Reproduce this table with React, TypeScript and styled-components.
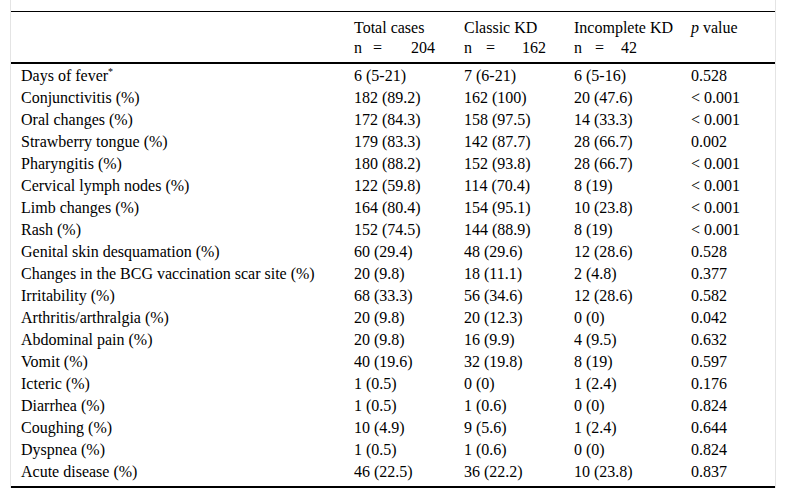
import React from "react";
import styled, { createGlobalStyle } from "styled-components";

const Global = createGlobalStyle`
  html, body { margin: 0; padding: 0; background: #fff; }
  body { font-family: "Liberation Serif", "Times New Roman", serif; color: #000; }
`;

const Page = styled.div`
  padding-left: 10px;
`;

const Frame = styled.div`
  width: 764px;
  padding-top: 11px;
  border-left: 1px solid #e4e4e4;
  border-right: 1px solid #e4e4e4;
`;

const Table = styled.table`
  width: 764px;
  border-collapse: collapse;
  table-layout: fixed;
  font-family: "Liberation Serif", "Times New Roman", serif;
  font-size: 16px;
  color: #000;
  border-top: 1px solid #000;
  border-bottom: 2px solid #000;
`;

const HeadRow = styled.tr`
  border-bottom: 2px solid #000;
`;

const HeadCell = styled.th`
  text-align: left;
  font-weight: normal;
  vertical-align: top;
  padding: 6px 0 4px 10px;
  line-height: 20px;
  white-space: nowrap;
`;

const Line = styled.div`
  display: flex;
  align-items: baseline;
  height: 20px;
`;

const Gap = styled.span<{ $w: number }>`
  margin-left: ${(p) => p.$w}px;
`;

const Cell = styled.td`
  padding: 1px 0 0 10px;
  height: 21px;
  line-height: 21px;
  white-space: nowrap;
`;

const SpacerCell = styled.td`
  height: 4px;
  padding: 0;
`;

const Sup = styled.sup`
  font-size: 10px;
  line-height: 0;
  vertical-align: 6px;
`;

const Ital = styled.i`
  font-style: italic;
`;

const cols = [333, 110, 110, 117, 94];

const heads: { title: string; n: string; g1: number; g2: number }[] = [
  { title: "Total cases", n: "204", g1: 11, g2: 29 },
  { title: "Classic KD", n: "162", g1: 14, g2: 27 },
  { title: "Incomplete KD", n: "42", g1: 13, g2: 17 },
];

const rows: [string, string, string, string, string][] = [
  ["Days of fever", "6 (5-21)", "7 (6-21)", "6 (5-16)", "0.528"],
  ["Conjunctivitis (%)", "182 (89.2)", "162 (100)", "20 (47.6)", "< 0.001"],
  ["Oral changes (%)", "172 (84.3)", "158 (97.5)", "14 (33.3)", "< 0.001"],
  ["Strawberry tongue (%)", "179 (83.3)", "142 (87.7)", "28 (66.7)", "0.002"],
  ["Pharyngitis (%)", "180 (88.2)", "152 (93.8)", "28 (66.7)", "< 0.001"],
  ["Cervical lymph nodes (%)", "122 (59.8)", "114 (70.4)", "8 (19)", "< 0.001"],
  ["Limb changes (%)", "164 (80.4)", "154 (95.1)", "10 (23.8)", "< 0.001"],
  ["Rash (%)", "152 (74.5)", "144 (88.9)", "8 (19)", "< 0.001"],
  ["Genital skin desquamation (%)", "60 (29.4)", "48 (29.6)", "12 (28.6)", "0.528"],
  ["Changes in the BCG vaccination scar site (%)", "20 (9.8)", "18 (11.1)", "2 (4.8)", "0.377"],
  ["Irritability (%)", "68 (33.3)", "56 (34.6)", "12 (28.6)", "0.582"],
  ["Arthritis/arthralgia (%)", "20 (9.8)", "20 (12.3)", "0 (0)", "0.042"],
  ["Abdominal pain (%)", "20 (9.8)", "16 (9.9)", "4 (9.5)", "0.632"],
  ["Vomit (%)", "40 (19.6)", "32 (19.8)", "8 (19)", "0.597"],
  ["Icteric (%)", "1 (0.5)", "0 (0)", "1 (2.4)", "0.176"],
  ["Diarrhea (%)", "1 (0.5)", "1 (0.6)", "0 (0)", "0.824"],
  ["Coughing (%)", "10 (4.9)", "9 (5.6)", "1 (2.4)", "0.644"],
  ["Dyspnea (%)", "1 (0.5)", "1 (0.6)", "0 (0)", "0.824"],
  ["Acute disease (%)", "46 (22.5)", "36 (22.2)", "10 (23.8)", "0.837"],
];

export default function App() {
  return (
    <>
      <Global />
      <Page>
        <Frame>
          <Table>
            <colgroup>
              {cols.map((w, i) => (
                <col key={i} style={{ width: w }} />
              ))}
            </colgroup>
            <thead>
              <HeadRow>
                <HeadCell />
                {heads.map((h) => (
                  <HeadCell key={h.title}>
                    <Line>{h.title}</Line>
                    <Line>
                      <span>n</span>
                      <Gap $w={h.g1}>=</Gap>
                      <Gap $w={h.g2}>{h.n}</Gap>
                    </Line>
                  </HeadCell>
                ))}
                <HeadCell>
                  <Line>
                    <Ital>p</Ital>&nbsp;value
                  </Line>
                </HeadCell>
              </HeadRow>
            </thead>
            <tbody>
              {rows.map((r, i) => (
                <tr key={r[0]}>
                  <Cell>
                    {r[0]}
                    {i === 0 && <Sup>*</Sup>}
                  </Cell>
                  <Cell>{r[1]}</Cell>
                  <Cell>{r[2]}</Cell>
                  <Cell>{r[3]}</Cell>
                  <Cell>{r[4]}</Cell>
                </tr>
              ))}
              <tr>
                <SpacerCell colSpan={5} />
              </tr>
            </tbody>
          </Table>
        </Frame>
      </Page>
    </>
  );
}
